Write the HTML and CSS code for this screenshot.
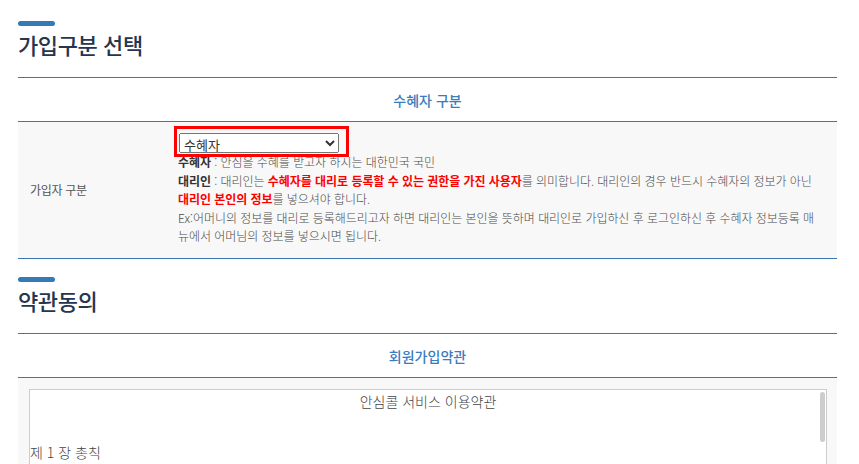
FILE: index.html
```html
<!DOCTYPE html>
<html lang="ko">

<head>
    <meta charset="UTF-8">
    <meta name="viewport" content="width=device-width, initial-scale=1.0">
    <title>회원가입</title>
    <link rel="stylesheet" href="styles.css">
</head>

<body>
    <div class="section">
        <span class="bar"></span>
        <h2>가입구분 선택</h2>
        <div class="board">
            <div class="board-head">수혜자 구분</div>
            <div class="board-row">
                <div class="label">가입자 구분</div>
                <div class="field">
                    <span class="mark">
                        <select class="sel">
                            <option>수혜자</option>
                            <option>대리인</option>
                        </select>
                    </span>
                    <p class="desc">
                        <b>수혜자</b> : 안심을 수혜를 받고자 하시는 대한민국 국민<br>
                        <b>대리인</b> : 대리인는 <strong>수혜자를 대리로 등록할 수 있는 권한을 가진 사용자</strong>를 의미합니다. 대리인의 경우 반드시 수혜자의 정보가 아닌 <strong>대리인 본인의 정보</strong>를 넣으셔야 합니다.<br>
                        Ex:어머니의 정보를 대리로 등록해드리고자 하면 대리인는 본인을 뜻하며 대리인로 가입하신 후 로그인하신 후 수혜자 정보등록 매뉴에서 어머님의 정보를 넣으시면 됩니다.
                    </p>
                </div>
            </div>
        </div>
    </div>

    <div class="section">
        <span class="bar"></span>
        <h2>약관동의</h2>
        <div class="board">
            <div class="board-head">회원가입약관</div>
            <div class="board-body">
                <div class="terms-box">
                    <div class="terms">
                        <p class="terms-title">안심콜 서비스 이용약관</p>
                        <p>&nbsp;</p>
                        <p>&nbsp;</p>
                        <p>제 1 장 총칙</p>
                        <p>&nbsp;</p>
                        <p>제 1 조 (목적)</p>
                        <p>이 약관은 안심콜 서비스(이하 "서비스"라 합니다)의 이용과 관련하여 회사와 회원 간의 권리, 의무 및 책임사항을 규정함을 목적으로 합니다.</p>
                        <p>&nbsp;</p>
                        <p>제 2 조 (약관의 효력 및 변경)</p>
                        <p>① 이 약관은 서비스 화면에 게시하거나 기타의 방법으로 회원에게 공지함으로써 효력이 발생합니다.</p>
                        <p>② 회사는 필요한 경우 관련 법령을 위배하지 않는 범위에서 이 약관을 변경할 수 있습니다.</p>
                        <p>&nbsp;</p>
                        <p>제 3 조 (용어의 정의)</p>
                        <p>① 회원 : 서비스에 가입하여 이용자 아이디를 부여받은 자</p>
                        <p>② 수혜자 : 안심을 수혜를 받고자 하시는 대한민국 국민</p>
                        <p>③ 대리인 : 수혜자를 대리로 등록할 수 있는 권한을 가진 사용자</p>
                    </div>
                    <span class="thumb"></span>
                </div>
            </div>
        </div>
    </div>
</body>

</html>
```

FILE: styles.css
```css
* {
    margin: 0px;
    padding: 0px;
    box-sizing: border-box;
}

body {
    padding: 21px 22px 0 18px;
    font-family: "Noto Sans CJK KR", "Noto Sans", sans-serif;
    color: #555;
    background-color: #fff;
}

.section {
    margin-bottom: 18px;
}

.bar {
    display: block;
    width: 37px;
    height: 5px;
    border-radius: 3px;
    background-color: #337ab7;
}

h2 {
    margin-top: 5px;
    font-size: 22px;
    line-height: 26px;
    font-weight: 500;
    letter-spacing: -0.4px;
    color: #263550;
}

.board {
    margin-top: 20px;
    border-top: 1px solid #3a76b0;
    border-bottom: 1px solid #3a76b0;
}

.board-head {
    height: 44px;
    line-height: 44px;
    border-bottom: 1px solid #3a76b0;
    text-align: center;
    font-size: 14px;
    font-weight: 500;
    letter-spacing: 0;
    color: #3a7cbd;
}

.board-row {
    display: grid;
    grid-template-columns: 160px 1fr;
    align-items: center;
    background-color: #f8f8f8;
}

.label {
    padding-left: 12px;
    font-size: 12px;
    letter-spacing: -0.3px;
    color: #555;
}

.field {
    padding: 11px 18px 12px 0;
}

/* 빨간 박스 표시 */
.mark {
    display: block;
    width: 160px;
    position: relative;
    margin-left: 1px;
}

.mark::after {
    content: "";
    position: absolute;
    top: -7px;
    left: -5px;
    right: -10px;
    bottom: -4px;
    border: 3px solid #f00;
    pointer-events: none;
}

.sel {
    display: block;
    width: 160px;
    height: 20px;
    font-family: inherit;
    font-size: 13px;
    color: #333;
}

.desc {
    font-size: 12px;
    font-weight: 300;
    line-height: 18.6px;
    letter-spacing: -0.05px;
    color: #4a4a4a;
}

.desc b {
    color: #333;
    font-weight: 700;
}

.desc strong {
    color: #f00;
    font-weight: 700;
}

.board-body {
    padding: 11px 10px 0 11px;
    background-color: #f8f8f8;
}

.terms-box {
    position: relative;
    border: 1px solid #ccc;
    background-color: #fff;
}

.terms {
    height: 200px;
    overflow: hidden;
    padding: 3px 0 0 0;
    font-size: 14px;
    font-weight: 300;
    line-height: 17px;
    color: #444;
}

.terms-title {
    text-align: center;
}

/* 스크롤바 */
.thumb {
    position: absolute;
    top: 2px;
    right: 1px;
    width: 5px;
    height: 50px;
    border-radius: 3px;
    background-color: #cdcdcd;
}
```
